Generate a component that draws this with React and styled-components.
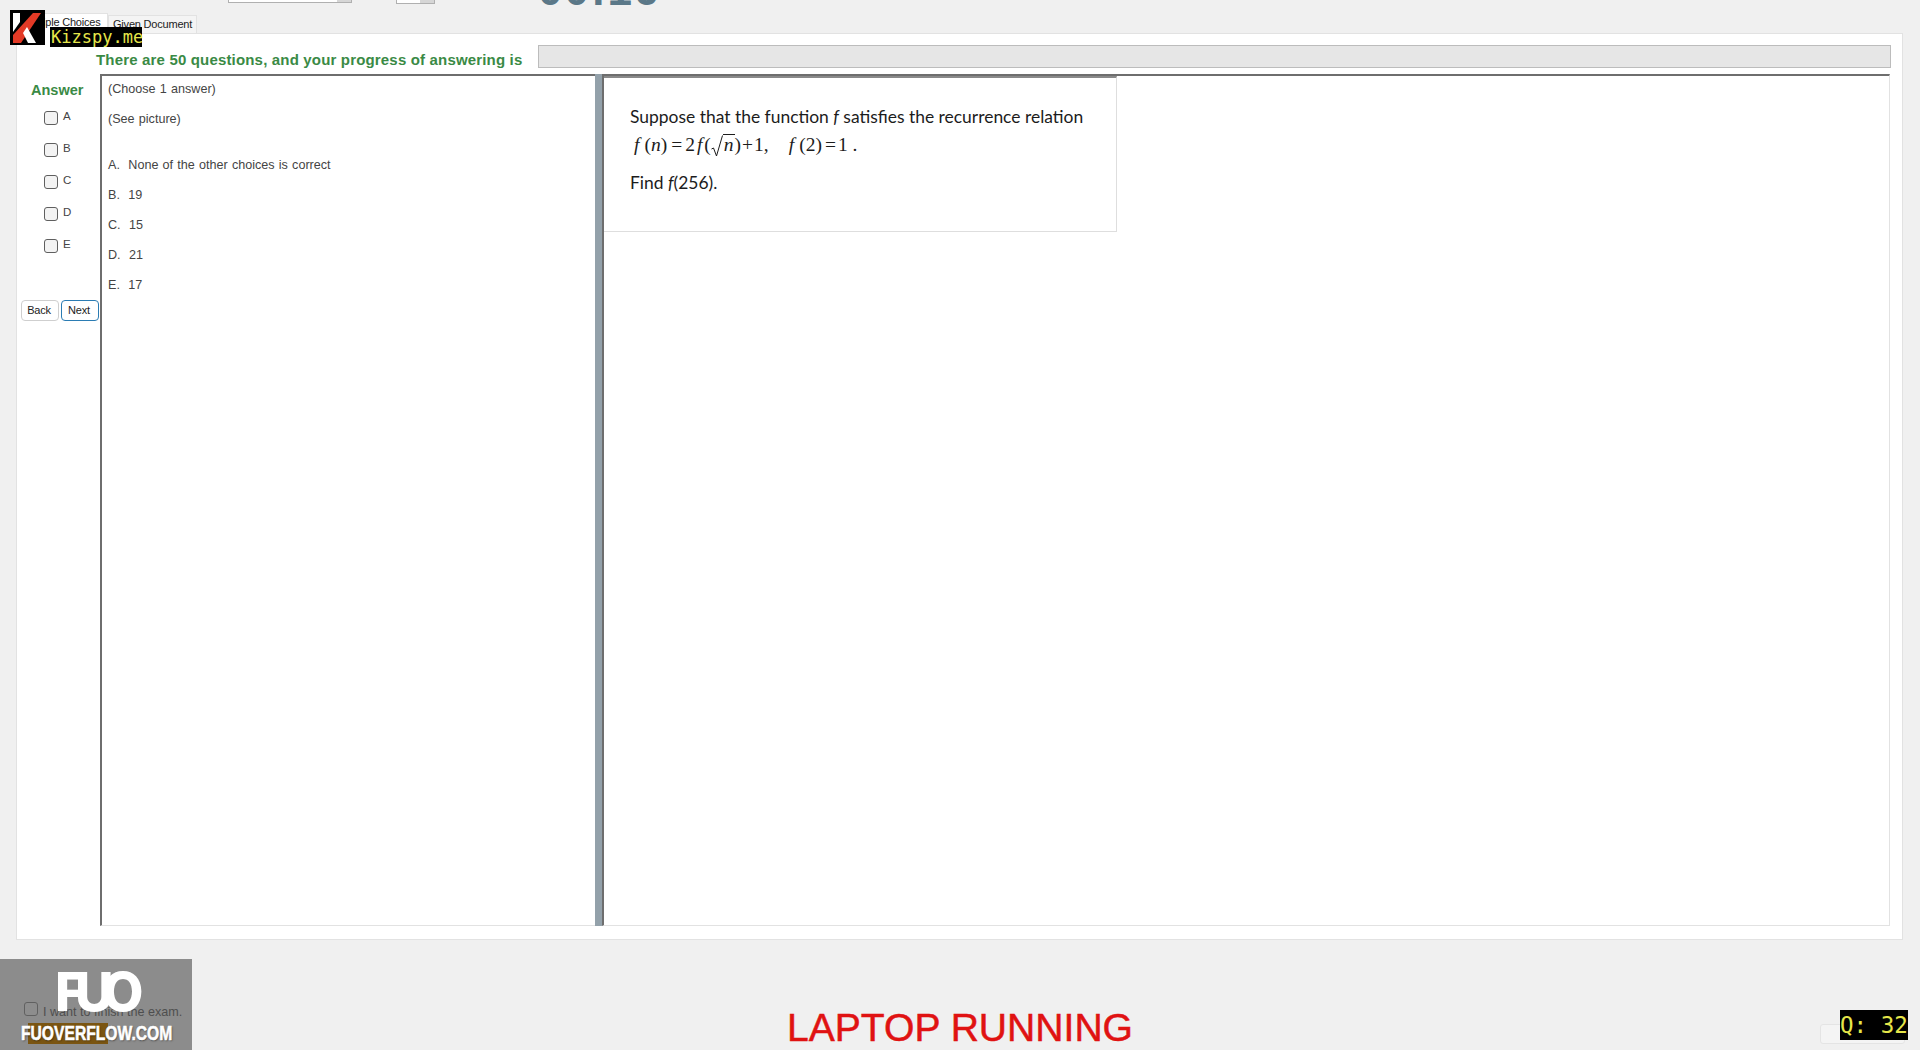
import styled, { createGlobalStyle } from 'styled-components'

const GlobalStyle = createGlobalStyle`
  html, body {
    margin: 0;
    padding: 0;
    background: #f0f0f0;
    overflow: hidden;
  }
  * { box-sizing: border-box; }
`

const Page = styled.div`
  position: relative;
  width: 1920px;
  height: 1050px;
  overflow: hidden;
  background: #f0f0f0;
  font-family: "Liberation Sans", Arial, sans-serif;
  display: flex;
  flex-direction: column;
`

const TopStrip = styled.div`
  height: 12px;
  padding-left: 228px;
  display: flex;
  align-items: flex-start;
`

const ClippedCombo = styled.div`
  width: ${p => p.$w}px;
  height: ${p => p.$h}px;
  margin-right: ${p => p.$gap}px;
  background: #fff;
  border: 1px solid #b0b0b0;
  border-top: 0;
  display: flex;
  justify-content: flex-end;
`

const ComboArrow = styled.div`
  width: 14px;
  background: #d6d6d6;
`

const ClippedClock = styled.div`
  width: 140px;
  height: 7px;
  overflow: hidden;
  display: flex;
  align-items: flex-end;
  color: #5b7888;
  font-weight: 700;
  font-size: 44px;
  line-height: 34px;
  letter-spacing: 2px;
`

const TabRow = styled.div`
  height: 21px;
  padding-left: 18px;
  display: flex;
  align-items: flex-end;
`

const Tab = styled.div`
  height: ${p => (p.$active ? 21 : 18)}px;
  width: ${p => p.$w}px;
  margin-bottom: ${p => (p.$active ? -1 : 0)}px;
  position: relative;
  background: ${p => (p.$active ? '#fff' : '#f4f4f4')};
  border: 1px solid #e2e2e2;
  border-bottom: 0;
  color: #222;
  font-size: 11px;
  line-height: 17px;
  padding: 0 0 0 4px;
  white-space: nowrap;
  letter-spacing: -0.2px;
`

const TabPanel = styled.div`
  height: 908px;
  margin: 0 17px 0 16px;
  background: #fff;
  border: 1px solid #e2e2e2;
  display: flex;
  flex-direction: column;
`

const ProgressRow = styled.div`
  height: 40px;
  padding: 11px 11px 0 79px;
  display: flex;
  align-items: flex-start;
`

const ProgressText = styled.div`
  width: 442px;
  margin-top: 4px;
  color: #3a8a45;
  font-size: 15px;
  line-height: 21px;
  font-weight: 700;
  letter-spacing: 0.17px;
  white-space: nowrap;
`

const ProgressBar = styled.div`
  flex: 1;
  height: 23px;
  background: #e6e6e6;
  border: 1px solid #bcbcbc;
`

const Body = styled.div`
  height: 852px;
  padding-right: 12px;
  display: flex;
`

const AnswerCol = styled.div`
  width: 83px;
  flex: none;
  display: flex;
  flex-direction: column;
`

const AnswerTitle = styled.div`
  padding: 8px 0 0 14px;
  height: 33px;
  color: #3a8a45;
  font-size: 14.5px;
  line-height: 16px;
  font-weight: 700;
`

const AnswerRow = styled.label`
  height: 32px;
  padding-left: 27px;
  display: flex;
  align-items: flex-start;
  gap: 5px;
  color: #444;
  font-size: 11.5px;
  line-height: 14px;
  padding-top: 2px;
`

const Box = styled.span`
  width: 14px;
  height: 14px;
  flex: none;
  margin-top: ${p => p.$top ?? 2}px;
  background: #f3f3f3;
  border: 1px solid #5f5f5f;
  border-radius: 3px;
`

const NavRow = styled.div`
  margin-top: 33px;
  padding-left: 4px;
  display: flex;
  gap: 2px;
`

const NavButton = styled.button`
  width: 38px;
  height: 21px;
  padding: 0 2px 0 0;
  background: #fff;
  border: 1px solid ${p => (p.$focused ? '#2b7cb3' : '#cfcfcf')};
  border-radius: 4px;
  color: #222;
  font-family: inherit;
  font-size: 11px;
  letter-spacing: -0.2px;
`

const ListPane = styled.div`
  width: 495px;
  flex: none;
  border-top: 2px solid #6e6e6e;
  border-left: 2px solid #6e6e6e;
  border-bottom: 1px solid #e2e2e2;
  padding: 6px 0 0 6px;
  color: #444;
  font-size: 12.6px;
  word-spacing: 0.7px;
`

const ListLine = styled.div`
  height: ${p => p.$h || 30}px;
  line-height: 15px;
  white-space: pre;
`

const Splitter = styled.div`
  width: 7px;
  flex: none;
  background: #93a1aa;
`

const DocPane = styled.div`
  flex: 1;
  border-top: 2px solid #6e6e6e;
  border-right: 1px solid #e2e2e2;
  border-bottom: 1px solid #e2e2e2;
  border-left: 2px solid #6e6e6e;
`

const QuestionImage = styled.div`
  width: 513px;
  height: 156px;
  border-top: 2px solid #8a8a8a;
  border-right: 1px solid #dedede;
  border-bottom: 1px solid #dedede;
  padding: 28px 0 0 26px;
  color: #1c1c1c;
  font-family: Lato, "Open Sans", sans-serif;
  font-size: 17.45px;
  line-height: 21px;
`

const ProseLine = styled.div`
  height: ${p => p.$h}px;
  white-space: nowrap;
`

const MathLine = styled.div`
  height: 45px;
  padding-top: 7px;
  display: flex;
  align-items: baseline;
  font-family: "Liberation Serif", "Times New Roman", serif;
  font-size: 19.5px;
  white-space: pre;
`

const Ital = styled.i`
  font-family: "Liberation Serif", "Times New Roman", serif;
  margin: 0 ${p => p.$r || 0}px 0 ${p => p.$l || 0}px;
`

const Sym = styled.span`
  margin: 0 ${p => p.$r || 0}px 0 ${p => p.$l || 0}px;
`

const Radical = styled.svg`
  width: 12px;
  height: 22px;
  align-self: flex-start;
  margin-top: 1px;
`

const Radicand = styled.span`
  border-top: 1px solid #1c1c1c;
  line-height: 20px;
  padding: 0 1px;
`

const Footer = styled.div`
  flex: 1;
  display: grid;
  grid-template-columns: 500px 1fr 500px;
`

const FinishRow = styled.label`
  padding: 64px 0 0 24px;
  display: flex;
  align-items: flex-start;
  gap: 5px;
  color: #222;
  font-size: 12.6px;
  line-height: 16px;
`

const Running = styled.div`
  padding-top: 66px;
  text-align: center;
  color: #e01212;
  font-size: 39.1px;
  line-height: 44px;
  white-space: nowrap;
  -webkit-text-stroke: 0.5px #e01212;
`

const EndCell = styled.div`
  padding: 84px 15px 0 0;
  display: flex;
  justify-content: flex-end;
`

const FinishButton = styled.div`
  width: 85px;
  height: 20px;
  background: #f4f4f4;
  border: 1px solid #e4e4e4;
  border-radius: 3px;
`

/* watermarks burned in over the capture */
const LogoMark = styled.svg`
  position: absolute;
  left: 10px;
  top: 10px;
  width: 35px;
  height: 35px;
`

const SiteTag = styled.div`
  position: absolute;
  left: 50px;
  top: 27px;
  width: 92px;
  height: 20px;
  background: #000;
  color: #e6e64a;
  font-family: "DejaVu Sans Mono", monospace;
  font-size: 17px;
  line-height: 20px;
  padding-left: 1px;
  white-space: nowrap;
`

const CounterTag = styled.div`
  position: absolute;
  left: 1840px;
  top: 1010px;
  width: 68px;
  height: 30px;
  background: #000;
  color: #e6e64a;
  font-family: "DejaVu Sans Mono", monospace;
  font-size: 22.5px;
  line-height: 30px;
  white-space: nowrap;
`

const FuoBadge = styled.div`
  position: absolute;
  left: 0;
  top: 959px;
  width: 192px;
  height: 91px;
  background: rgba(97, 97, 97, 0.7);
`

const FuoMark = styled.div`
  position: absolute;
  left: 55px;
  top: 8px;
  color: #fff;
  font-family: Inter, "Liberation Sans", sans-serif;
  font-size: 53px;
  font-weight: 800;
  line-height: 50px;
  letter-spacing: -11px;
`

const FuoHighlight = styled.div`
  position: absolute;
  left: 28px;
  top: 64px;
  width: 80px;
  height: 21px;
  background: #7a5512;
`

const FuoSite = styled.div`
  position: absolute;
  left: 21px;
  top: 63px;
  color: #fff;
  font-size: 21px;
  line-height: 22px;
  font-weight: 700;
  white-space: nowrap;
  transform: scaleX(0.745);
  transform-origin: left center;
  -webkit-text-stroke: 0.6px #fff;
  text-shadow: 1px 1px 2px rgba(0, 0, 0, 0.5);
`

const answers = ['A', 'B', 'C', 'D', 'E']

const choices = [
  'A.  None of the other choices is correct',
  'B.  19',
  'C.  15',
  'D.  21',
  'E.  17',
]

function App() {
  return (
    <Page>
      <GlobalStyle />
      <TopStrip>
        <ClippedCombo $w={124} $h={3} $gap={44}><ComboArrow /></ClippedCombo>
        <ClippedCombo $w={39} $h={4} $gap={103}><ComboArrow /></ClippedCombo>
        <ClippedClock>00:16</ClippedClock>
      </TopStrip>
      <TabRow>
        <Tab $active $w={90}>Multiple Choices</Tab>
        <Tab $w={89}>Given Document</Tab>
      </TabRow>
      <TabPanel>
        <ProgressRow>
          <ProgressText>There are 50 questions, and your progress of answering is</ProgressText>
          <ProgressBar />
        </ProgressRow>
        <Body>
          <AnswerCol>
            <AnswerTitle>Answer</AnswerTitle>
            {answers.map(a => (
              <AnswerRow key={a}><Box />{a}</AnswerRow>
            ))}
            <NavRow>
              <NavButton>Back</NavButton>
              <NavButton $focused>Next</NavButton>
            </NavRow>
          </AnswerCol>
          <ListPane>
            <ListLine>(Choose 1 answer)</ListLine>
            <ListLine $h={46}>(See picture)</ListLine>
            {choices.map(c => (
              <ListLine key={c}>{c}</ListLine>
            ))}
          </ListPane>
          <Splitter />
          <DocPane>
            <QuestionImage>
              <ProseLine $h={21}>Suppose that the function <i>f</i> satisfies the recurrence relation</ProseLine>
              <MathLine>
                <Ital $l={4} $r={5}>f</Ital>
                <Sym>(</Sym><Ital>n</Ital><Sym $r={4}>)</Sym>
                <Sym $r={3}>=</Sym>
                <Sym $r={2}>2</Sym>
                <Ital $r={2}>f</Ital>
                <Sym>(</Sym>
                <Radical viewBox="0 0 12 22">
                  <path d="M0.5 14 L2.5 13 L5.5 21 L11.5 0.5" fill="none" stroke="#1c1c1c" strokeWidth="1" />
                </Radical>
                <Radicand><Ital>n</Ital></Radicand>
                <Sym $r={1}>)</Sym>
                <Sym $r={1}>+</Sym>
                <Sym>1,</Sym>
                <Ital $l={20} $r={5}>f</Ital>
                <Sym $r={3}>(2)</Sym>
                <Sym $r={2}>=</Sym>
                <Sym>1 .</Sym>
              </MathLine>
              <ProseLine $h={21}>Find <i>f</i>(256).</ProseLine>
            </QuestionImage>
          </DocPane>
        </Body>
      </TabPanel>
      <Footer>
        <FinishRow><Box $top={-2} />I want to finish the exam.</FinishRow>
        <Running>LAPTOP RUNNING</Running>
        <EndCell><FinishButton /></EndCell>
      </Footer>

      <LogoMark viewBox="0 0 35 35">
        <rect width="35" height="35" fill="#000" />
        <polygon points="3,3 10,3 10,12 3,22" fill="#fff" />
        <polygon points="23,3 31,3 11,33 3,33 3,25" fill="#e33a26" />
        <polygon points="17,17 26,33 18,33 13,23" fill="#fff" />
      </LogoMark>
      <SiteTag>Kizspy.me</SiteTag>
      <FuoBadge>
        <FuoMark>FUO</FuoMark>
        <FuoHighlight />
        <FuoSite>FUOVERFLOW.COM</FuoSite>
      </FuoBadge>
      <CounterTag>Q: 32</CounterTag>
    </Page>
  )
}

export default App
